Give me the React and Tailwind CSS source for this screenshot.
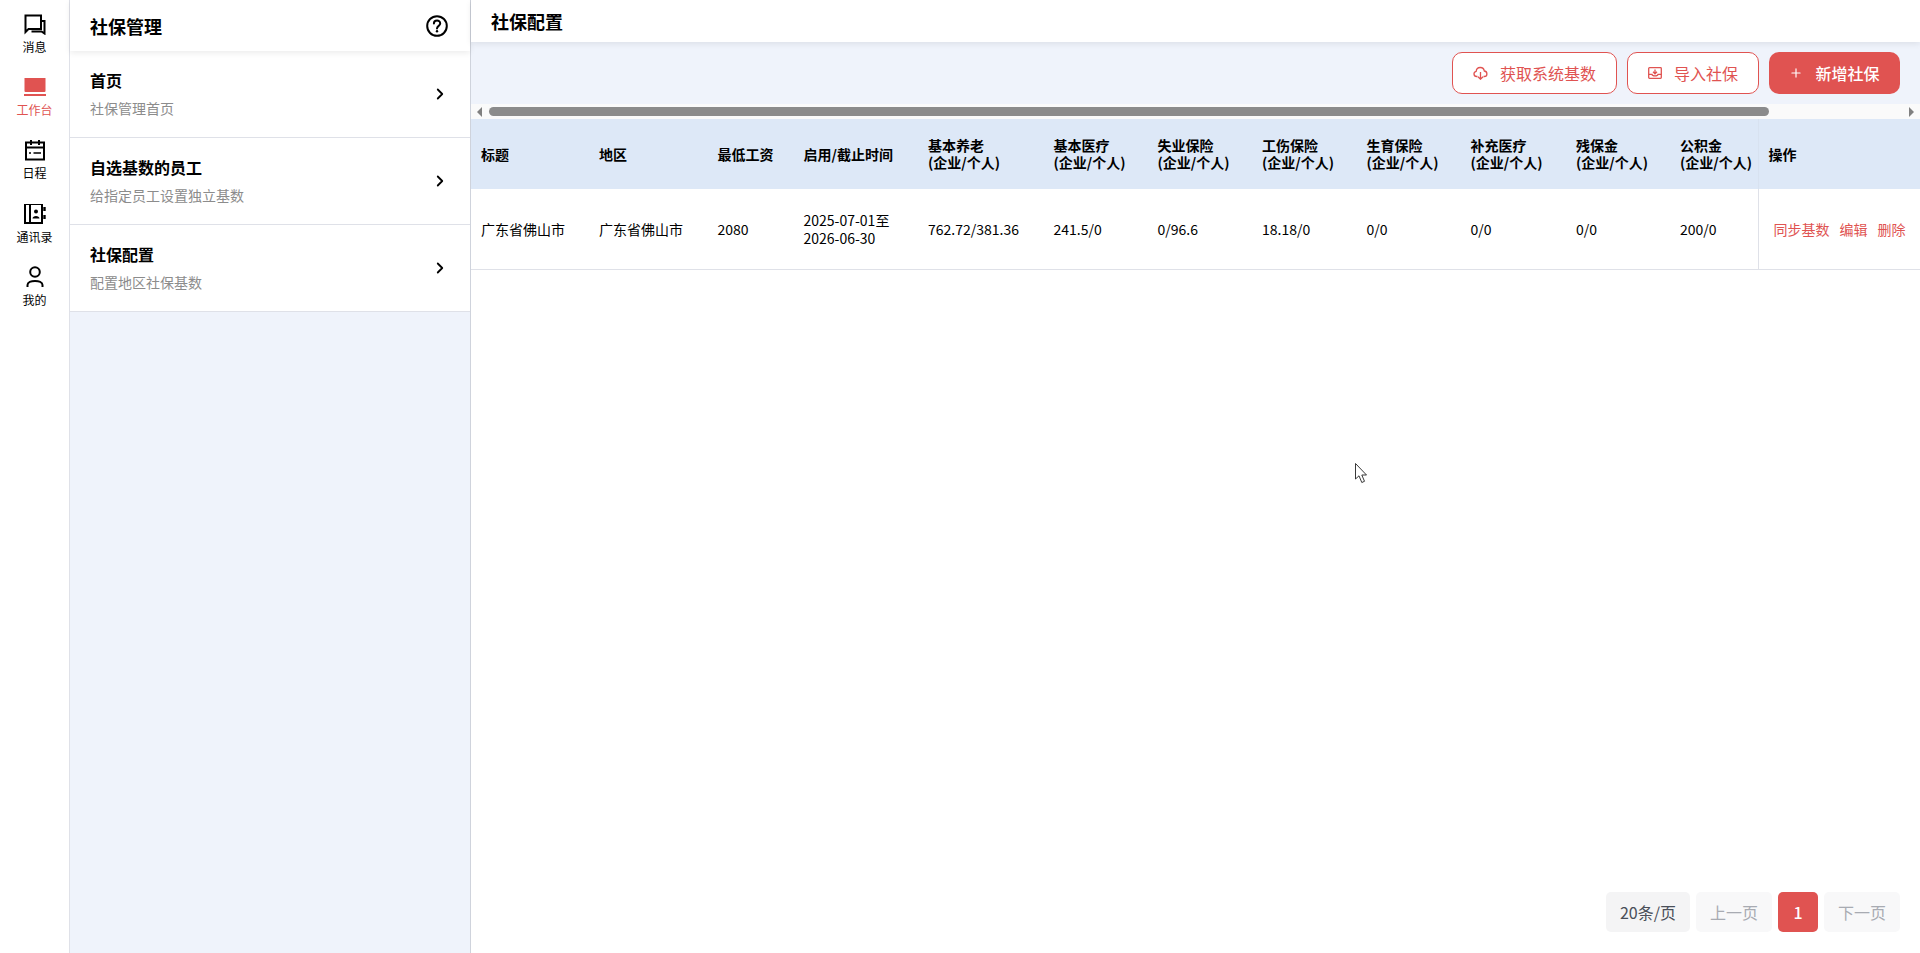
import React from "react";
import { ChevronRight, Plus } from "lucide-react";

const Msg = () => (
  <svg width="22" height="21" viewBox="0 0 22 21" fill="none" stroke="#000" strokeWidth="2">
    <path d="M17 1.5H1.5V15.5V18L4.5 15H17Z" />
    <path d="M17 7H20.5V19.5L17.5 17.5H7.5" />
  </svg>
);
const Laptop = () => (
  <svg width="22" height="20" viewBox="0 1 22 20">
    <rect x="0.5" y="0.5" width="21" height="14.5" rx="1" fill="#e05351" />
    <rect x="0" y="17" width="22" height="2" fill="#e05351" />
  </svg>
);
const Cal = () => (
  <svg width="22" height="22" viewBox="0 1 22 22" fill="none" stroke="#000" strokeWidth="2">
    <rect x="2" y="3.5" width="18" height="17" />
    <path d="M7 0.5V6M15 0.5V6M2 8.5H20" />
    <path d="M5 14H7M9.5 14H17" strokeWidth="1.6" />
  </svg>
);
const Book = () => (
  <svg width="22" height="21" viewBox="0 1 22 21" fill="none" stroke="#000" strokeWidth="2">
    <rect x="1" y="1" width="17" height="19" />
    <path d="M6 1V20" />
    <circle cx="12" cy="8.5" r="2" fill="#000" stroke="none" />
    <path d="M8.5 15.5C8.5 12 15.5 12 15.5 15.5Z" fill="#000" stroke="none" />
    <path d="M20.5 4V8M20.5 12V16" strokeWidth="2.4" />
  </svg>
);
const User = () => (
  <svg width="18" height="22" viewBox="0 0 18 22" fill="none" stroke="#000" strokeWidth="2">
    <circle cx="9" cy="6" r="4.8" />
    <path d="M1.5 21V19C1.5 13.5 16.5 13.5 16.5 19V21" />
  </svg>
);
const Help = () => (
  <svg width="22" height="22" viewBox="0 0 22 22" fill="none" stroke="#000" strokeWidth="2">
    <circle cx="11" cy="11" r="9.8" />
    <path d="M7.9 8.6C7.9 4.6 14.2 4.6 14.2 8.5C14.2 10.8 11 11 11 13.5" strokeLinecap="round" />
    <circle cx="11" cy="16.3" r="1.2" fill="#000" stroke="none" />
  </svg>
);
const Cloud = () => (
  <svg width="15" height="14" viewBox="0 0 15 14" fill="none" stroke="#e05351" strokeWidth="1.3">
    <path d="M4.5 10.5H3.6C0.4 10.5 0 6 3.2 5.3C3.6 0.4 10.6 0.2 11.3 5C14.8 5.4 14.8 10.5 11.2 10.5H10.5" />
    <path d="M7.5 6V13M5 10.8L7.5 13.2L10 10.8" />
  </svg>
);
const Import = () => (
  <svg width="14" height="12" viewBox="0 0 14 12" fill="none" stroke="#e05351" strokeWidth="1.3">
    <rect x="0.7" y="0.7" width="12.6" height="10.6" rx="0.8" />
    <path d="M7 2.5V6.5M5 4.8L7 6.8L9 4.8" />
    <path d="M0.7 7.3H4C4.4 9.3 9.6 9.3 10 7.3H13.3" />
  </svg>
);
const Cursor = () => (
  <svg width="14" height="21" viewBox="0 0 14 21" className="absolute left-[1355px] top-[463px]">
    <path d="M0.5 0.5V16L4 12.8L6.8 19.5L9.5 18.3L6.8 12H11.5Z" fill="#fff" stroke="#222" strokeWidth="0.9" />
  </svg>
);

const rail = [
  [Msg, "消息"],
  [Laptop, "工作台", true],
  [Cal, "日程"],
  [Book, "通讯录"],
  [User, "我的"],
];

const menu = [
  ["首页", "社保管理首页"],
  ["自选基数的员工", "给指定员工设置独立基数"],
  ["社保配置", "配置地区社保基数"],
];

const cols = [
  ["标题", 118],
  ["地区", 118.5],
  ["最低工资", 86],
  ["启用/截止时间", 124.5],
  ["基本养老", 125.5, true],
  ["基本医疗", 104, true],
  ["失业保险", 104.5, true],
  ["工伤保险", 104.5, true],
  ["生育保险", 104, true],
  ["补充医疗", 105.5, true],
  ["残保金", 104, true],
  ["公积金", 88, true],
];

const row = ["广东省佛山市", "广东省佛山市", "2080", "", "762.72/381.36", "241.5/0", "0/96.6", "18.18/0", "0/0", "0/0", "0/0", "200/0"];

export default function App() {
  return (
    <div className="relative flex h-screen w-full overflow-hidden bg-white text-black font-['Noto_Sans_CJK_SC','Noto_Sans',sans-serif]">
      <nav className="flex w-[70px] shrink-0 flex-col items-center border-r border-[#dfe1e8] pt-[13px]">
        {rail.map(([Icon, label, active]) => (
          <div key={label} className="flex h-[63.2px] w-full flex-col items-center">
            <div className="flex h-[23px] items-center justify-center"><Icon /></div>
            <span className={`mt-[2px] text-[12px] leading-[17px] ${active ? "text-[#e05351]" : "text-black"}`}>{label}</span>
          </div>
        ))}
      </nav>

      <aside className="flex w-[401px] shrink-0 flex-col border-r border-[#cfd3dc] bg-[#eff3fb]">
        <div className="relative z-10 flex h-[51px] shrink-0 items-center justify-between bg-white pl-[20px] pr-[22px] shadow-[0_2px_6px_rgba(0,0,0,0.08)]">
          <span className="text-[18px] font-bold leading-[26px]">社保管理</span>
          <Help />
        </div>
        {menu.map(([title, sub]) => (
          <div key={title} className="flex h-[87px] shrink-0 items-center justify-between border-b border-[#dfe1e8] bg-white pl-[20px] pr-[21px]">
            <div className="mb-[2px] flex flex-col">
              <span className="text-[16px] font-bold leading-[22px]">{title}</span>
              <span className="mt-[7px] text-[14px] leading-[20px] text-[#8c8c8c]">{sub}</span>
            </div>
            <ChevronRight size={18} strokeWidth={2.4} color="#000" />
          </div>
        ))}
      </aside>

      <main className="flex min-w-0 flex-1 flex-col">
        <div className="relative z-10 flex h-[42px] shrink-0 items-center bg-white pl-[20px] shadow-[0_2px_6px_rgba(0,0,0,0.08)]">
          <span className="text-[18px] font-bold leading-[26px]">社保配置</span>
        </div>

        <div className="flex h-[62px] shrink-0 items-start justify-end gap-[10px] bg-[#eff3fb] pr-[20px] pt-[10px]">
          <button className="flex h-[42px] w-[165px] items-center justify-center gap-[12px] rounded-[10px] border border-[#e05351] bg-white text-[16px] text-[#e05351]">
            <Cloud /><span>获取系统基数</span>
          </button>
          <button className="flex h-[42px] w-[132px] items-center justify-center gap-[12px] rounded-[10px] border border-[#e05351] bg-white text-[16px] text-[#e05351]">
            <Import /><span>导入社保</span>
          </button>
          <button className="flex h-[42px] w-[131px] items-center justify-center gap-[12px] rounded-[10px] bg-[#e05351] text-[16px] font-medium text-white">
            <Plus size={14} strokeWidth={2} /><span>新增社保</span>
          </button>
        </div>

        <div className="flex h-[15px] shrink-0 items-center bg-[#fafafa]">
          <div className="flex w-[16px] shrink-0 justify-center">
            <div className="h-0 w-0 border-y-[5px] border-r-[5px] border-y-transparent border-r-[#808080]" />
          </div>
          <div className="ml-[2px] h-[9px] w-[1280px] rounded-[5px] bg-[#8b8b8b]" />
          <div className="flex-1" />
          <div className="flex w-[17px] shrink-0 justify-center">
            <div className="h-0 w-0 border-y-[5px] border-l-[5px] border-y-transparent border-l-[#808080]" />
          </div>
        </div>

        <div className="min-h-0 flex-1">
          <table className="w-full table-fixed border-collapse text-left text-[14px]">
            <colgroup>
              {cols.map(([t, w]) => <col key={t} style={{ width: w }} />)}
              <col />
            </colgroup>
            <thead>
              <tr className="h-[70px] bg-[#dde8f7]">
                {cols.map(([t, , sub]) => (
                  <th key={t} className="pl-[10px] pr-0 align-middle text-[14px] font-bold leading-[17px]">
                    {t}{sub && <><br /><span className="whitespace-nowrap">(企业/个人)</span></>}
                  </th>
                ))}
                <th className="border-l border-[#d8e2f0] pl-[10px] text-[14px] font-bold leading-[17px]">操作</th>
              </tr>
            </thead>
            <tbody>
              <tr className="h-[80px] border-b border-[#dfe1e8]">
                {row.map((c, i) => (
                  <td key={i} className="pl-[10px] pr-0 align-middle leading-[18px]">
                    {i === 3 ? <>2025-07-01至<br />2026-06-30</> : <span className="whitespace-nowrap">{c}</span>}
                  </td>
                ))}
                <td className="whitespace-nowrap border-l border-[#dfe1e8] pl-[15px] pt-[1px] text-[14px] text-[#e05351]">
                  <span>同步基数</span><span className="ml-[10px]">编辑</span><span className="ml-[10px]">删除</span>
                </td>
              </tr>
            </tbody>
          </table>
        </div>

        <div className="flex shrink-0 justify-end gap-[6px] pb-[21px] pr-[20px] text-[16px]">
          <div className="flex h-[40px] w-[84px] items-center justify-center rounded-[5px] bg-[#f4f4f5] text-[#4a4f59]">20条/页</div>
          <div className="flex h-[40px] w-[76px] items-center justify-center rounded-[5px] bg-[#f8f8f9] text-[#a8abb2]">上一页</div>
          <div className="flex h-[40px] w-[40px] items-center justify-center rounded-[5px] bg-[#e05351] font-medium text-white">1</div>
          <div className="flex h-[40px] w-[76px] items-center justify-center rounded-[5px] bg-[#f8f8f9] text-[#a8abb2]">下一页</div>
        </div>
      </main>

      <Cursor />
    </div>
  );
}
